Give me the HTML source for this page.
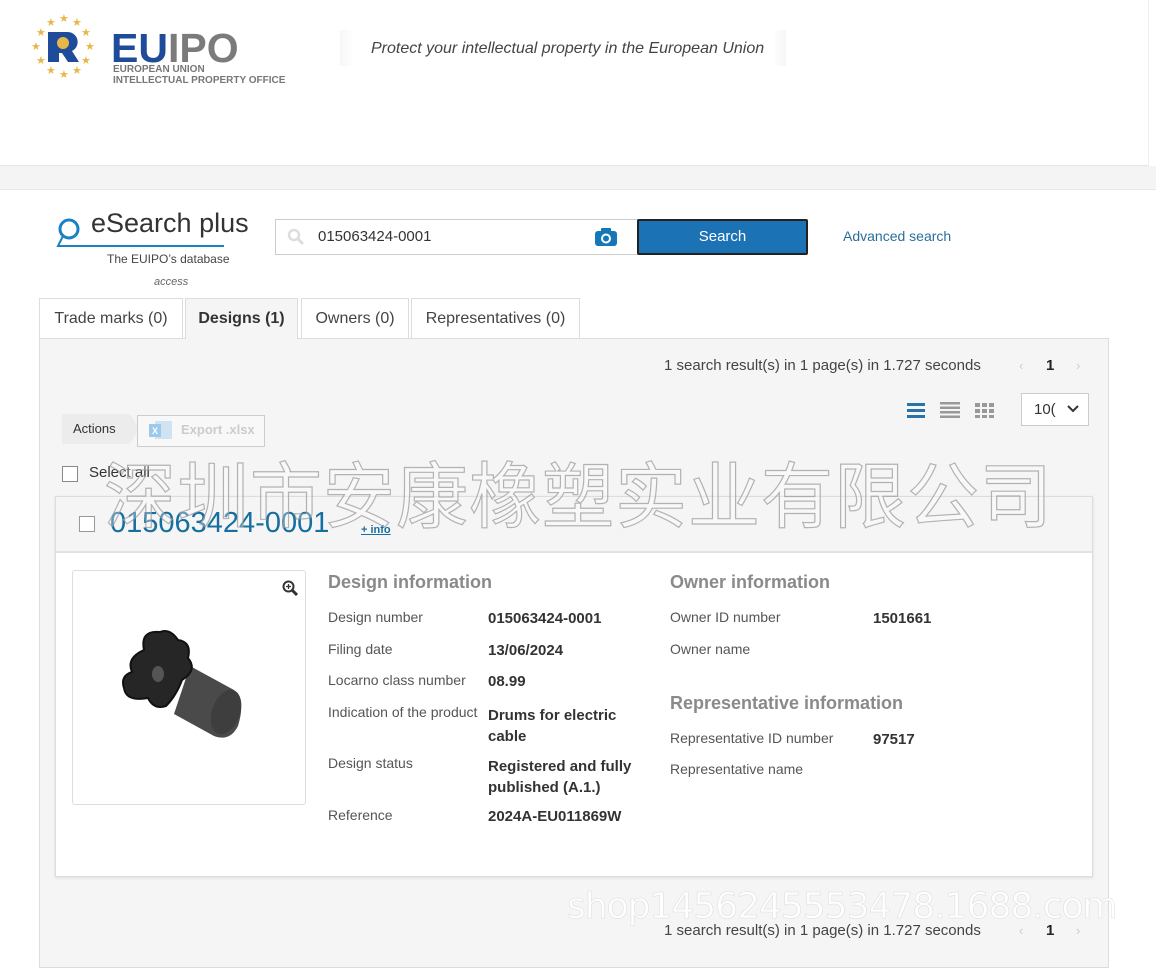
<!DOCTYPE html>
<html><head><meta charset="utf-8"><style>
*{margin:0;padding:0;box-sizing:border-box}
body{width:1156px;height:955px;overflow:hidden;background:#fff;font-family:"Liberation Sans","DejaVu Sans",sans-serif;position:relative;color:#333}
.a{position:absolute;white-space:nowrap}
.lbl{font-size:14px;color:#555}
.val{font-size:15px;font-weight:bold;color:#333}
.h{font-size:18px;font-weight:bold;color:#8a8a8a}
</style></head><body>
<div class="a" style="left:0;top:0;width:1149px;height:166px;background:#fff;border-right:1px solid #eee;border-bottom:1px solid #e6e6e6"></div>
<div class="a" style="left:0;top:166px;width:1156px;height:24px;background:#f4f4f4;border-bottom:1px solid #e8e8e8"></div>
<svg class="a" style="left:26px;top:12px" width="74" height="74" viewBox="0 0 74 74">
<g fill="#e6b84a" font-size="11" font-family="DejaVu Sans">
<text x="33" y="10">★</text><text x="46" y="14">★</text><text x="55" y="24">★</text><text x="59" y="38">★</text><text x="55" y="52">★</text><text x="46" y="62">★</text><text x="33" y="66">★</text><text x="20" y="62">★</text><text x="10" y="52">★</text><text x="5" y="38">★</text><text x="10" y="24">★</text><text x="20" y="14">★</text>
</g>
<path d="M22 20h20a10 10 0 0 1 4 19l7 11h-11l-6-9h-3v9h-11z" fill="#1f4c9a"/>
<circle cx="37" cy="31" r="6" fill="#e6b84a"/>
</svg>
<div class="a" style="left:111px;top:28px;font-size:41px;font-weight:900;letter-spacing:0px;line-height:40px"><span style="color:#1f4c9a">EU</span><span style="color:#7b7b7b">IPO</span></div>
<div class="a" style="left:113px;top:64px;font-size:10px;color:#777;line-height:11px;font-weight:bold">EUROPEAN UNION<br>INTELLECTUAL PROPERTY OFFICE</div>
<div class="a" style="left:340px;top:30px;width:446px;height:36px;background:linear-gradient(90deg,#f6f6f6,#fff 3%,#fff 97%,#f6f6f6)"></div>
<div class="a" style="left:371px;top:40px;font-size:16px;font-style:italic;color:#444">Protect your intellectual property in the European Union</div>

<svg class="a" style="left:54px;top:215px" width="180" height="36"><circle cx="15" cy="14" r="9" fill="none" stroke="#1a82c4" stroke-width="3"/><path d="M9 21 L4 31 L170 31" fill="none" stroke="#1a82c4" stroke-width="2"/></svg>
<div class="a" style="left:91px;top:208px;font-size:27px;color:#333">eSearch plus</div>
<div class="a" style="left:107px;top:252px;font-size:12px;color:#444">The EUIPO’s database</div>
<div class="a" style="left:154px;top:276px;font-size:11px;font-style:italic;color:#666">access</div>

<div class="a" style="left:275px;top:219px;width:364px;height:36px;border:1px solid #ccc;background:#fff"></div>
<svg class="a" style="left:287px;top:228px" width="18" height="18"><circle cx="7" cy="7" r="5" fill="none" stroke="#ddd" stroke-width="2.5"/><path d="M11 11l5 5" stroke="#ddd" stroke-width="3"/></svg>
<div class="a" style="left:318px;top:228px;font-size:15px;color:#333">015063424-0001</div>
<svg class="a" style="left:595px;top:228px" width="22" height="18"><rect x="0" y="3" width="22" height="15" rx="3" fill="#1577b5"/><rect x="6" y="0" width="10" height="5" rx="1" fill="#1577b5"/><circle cx="11" cy="10.5" r="4" fill="none" stroke="#fff" stroke-width="2"/></svg>
<div class="a" style="left:637px;top:219px;width:171px;height:36px;background:#1b72b5;border:2px solid #222;border-radius:2px;color:#fff;font-size:15px;text-align:center;line-height:32px">Search</div>
<div class="a" style="left:843px;top:228px;font-size:14px;color:#2a6e9b">Advanced search</div>

<div class="a" style="left:39px;top:298px;width:144px;height:41px;border:1px solid #ddd;border-bottom:none;background:#fff;font-size:16px;color:#444;text-align:center;line-height:40px">Trade marks (0)</div>
<div class="a" style="left:185px;top:298px;width:113px;height:41px;border:1px solid #ddd;border-bottom:none;background:#f5f5f5;font-size:16px;font-weight:bold;color:#333;text-align:center;line-height:40px;z-index:2">Designs (1)</div>
<div class="a" style="left:301px;top:298px;width:108px;height:41px;border:1px solid #ddd;border-bottom:none;background:#fff;font-size:16px;color:#444;text-align:center;line-height:40px">Owners (0)</div>
<div class="a" style="left:411px;top:298px;width:169px;height:41px;border:1px solid #ddd;border-bottom:none;background:#fff;font-size:16px;color:#444;text-align:center;line-height:40px">Representatives (0)</div>

<div class="a" style="left:39px;top:338px;width:1070px;height:630px;background:#f5f5f5;border:1px solid #ddd"></div>
<div class="a" style="left:664px;top:357px;font-size:15px;color:#444">1 search result(s) in 1 page(s) in 1.727 seconds</div>
<div class="a" style="left:1019px;top:358px;font-size:13px;color:#ccc">‹</div>
<div class="a" style="left:1046px;top:357px;font-size:15px;font-weight:bold;color:#222">1</div>
<div class="a" style="left:1076px;top:358px;font-size:13px;color:#ccc">›</div>
<svg class="a" style="left:907px;top:402px" width="92" height="16">
<rect x="0" y="1" width="18" height="3" fill="#2a72aa"/><rect x="0" y="7" width="18" height="3" fill="#2a72aa"/><rect x="0" y="13" width="18" height="3" fill="#2a72aa"/>
<g fill="#999"><rect x="33" y="0" width="20" height="2.5"/><rect x="33" y="4.5" width="20" height="2.5"/><rect x="33" y="9" width="20" height="2.5"/><rect x="33" y="13.5" width="20" height="2.5"/>
<rect x="68" y="1" width="5" height="4"/><rect x="75" y="1" width="5" height="4"/><rect x="82" y="1" width="5" height="4"/><rect x="68" y="7" width="5" height="4"/><rect x="75" y="7" width="5" height="4"/><rect x="82" y="7" width="5" height="4"/><rect x="68" y="13" width="5" height="3"/><rect x="75" y="13" width="5" height="3"/><rect x="82" y="13" width="5" height="3"/></g></svg>
<div class="a" style="left:1021px;top:393px;width:68px;height:33px;border:1px solid #ccc;background:#fff;font-size:15px;color:#333;padding:7px 0 0 12px">10(</div>
<svg class="a" style="left:1066px;top:404px" width="14" height="10"><path d="M2 2l5 5 5-5" fill="none" stroke="#333" stroke-width="2"/></svg>

<svg class="a" style="left:62px;top:414px" width="78" height="30"><path d="M0 0h68l9 15-9 15H0z" fill="#ececec"/></svg>
<div class="a" style="left:73px;top:421px;font-size:13px;color:#333">Actions</div>
<div class="a" style="left:137px;top:415px;width:128px;height:32px;border:1px solid #ccc;background:#f8f8f8"></div>
<svg class="a" style="left:149px;top:420px" width="24" height="20"><rect x="6" y="1" width="17" height="18" fill="#cfe3f2"/><rect x="0" y="4" width="12" height="13" fill="#9cc9ec"/><text x="3" y="14" font-size="9" fill="#fff" font-family="Liberation Sans" font-weight="bold">X</text></svg>
<div class="a" style="left:181px;top:422px;font-size:13px;font-weight:bold;color:#ccc">Export .xlsx</div>
<div class="a" style="left:62px;top:466px;width:16px;height:16px;border:1px solid #888;background:#fff"></div>
<div class="a" style="left:89px;top:464px;font-size:15px;color:#333">Select all</div>

<div class="a" style="left:55px;top:496px;width:1038px;height:381px;background:#fff;border:1px solid #ddd;box-shadow:0 1px 3px rgba(0,0,0,.1)"></div>
<div class="a" style="left:56px;top:497px;width:1036px;height:56px;background:#f5f5f5;border-bottom:2px solid #e2e2e2"></div>
<div class="a" style="left:79px;top:516px;width:16px;height:16px;border:1px solid #999;background:#fff"></div>
<div class="a" style="left:110px;top:507px;font-size:29px;color:#166fa1">015063424-0001</div>
<div class="a" style="left:361px;top:524px;font-size:11px;font-weight:bold;color:#166fa1;text-decoration:underline">+ info</div>

<div class="a" style="left:72px;top:570px;width:234px;height:235px;border:1px solid #ddd;border-radius:3px;background:#fff"></div>
<svg class="a" style="left:282px;top:580px" width="16" height="16"><circle cx="6.5" cy="6.5" r="5" fill="none" stroke="#333" stroke-width="2"/><path d="M10 10l5 5" stroke="#333" stroke-width="3"/><path d="M4 6.5h5M6.5 4v5" stroke="#333" stroke-width="1.3"/></svg>
<svg class="a" style="left:118px;top:628px" width="130" height="112">
<path d="M72 38 L116 62 Q128 72 120 98 Q112 114 96 108 L56 86 Z" fill="#4a4a4a"/>
<ellipse cx="108" cy="84" rx="14" ry="23" transform="rotate(20 108 84)" fill="#3e3e3e"/>
<path d="M26 22 Q22 2 42 4 Q52 0 60 12 Q74 14 70 30 Q80 42 64 52 Q58 68 48 78 Q36 82 30 70 Q8 74 6 60 Q2 48 14 44 Q8 30 26 22 Z" fill="#262626" stroke="#111" stroke-width="2"/>
<ellipse cx="40" cy="46" rx="6" ry="8" fill="#555"/>
</svg>

<div class="a h" style="left:328px;top:572px">Design information</div>
<div class="a lbl" style="left:328px;top:609px">Design number</div><div class="a val" style="left:488px;top:610px">015063424-0001</div>
<div class="a lbl" style="left:328px;top:641px">Filing date</div><div class="a val" style="left:488px;top:642px">13/06/2024</div>
<div class="a lbl" style="left:328px;top:672px">Locarno class number</div><div class="a val" style="left:488px;top:673px">08.99</div>
<div class="a lbl" style="left:328px;top:704px">Indication of the product</div><div class="a val" style="left:488px;top:705px;line-height:21px">Drums for electric<br>cable</div>
<div class="a lbl" style="left:328px;top:755px">Design status</div><div class="a val" style="left:488px;top:756px;line-height:21px">Registered and fully<br>published (A.1.)</div>
<div class="a lbl" style="left:328px;top:807px">Reference</div><div class="a val" style="left:488px;top:808px">2024A-EU011869W</div>

<div class="a h" style="left:670px;top:572px">Owner information</div>
<div class="a lbl" style="left:670px;top:609px">Owner ID number</div><div class="a val" style="left:873px;top:610px">1501661</div>
<div class="a lbl" style="left:670px;top:641px">Owner name</div>
<div class="a h" style="left:670px;top:693px">Representative information</div>
<div class="a lbl" style="left:670px;top:730px">Representative ID number</div><div class="a val" style="left:873px;top:731px">97517</div>
<div class="a lbl" style="left:670px;top:761px">Representative name</div>

<div class="a" style="left:664px;top:922px;font-size:15px;color:#444">1 search result(s) in 1 page(s) in 1.727 seconds</div>
<div class="a" style="left:1019px;top:923px;font-size:13px;color:#ccc">‹</div>
<div class="a" style="left:1046px;top:922px;font-size:15px;font-weight:bold;color:#222">1</div>
<div class="a" style="left:1076px;top:923px;font-size:13px;color:#ccc">›</div>

<div class="a" style="left:104px;top:441px;font-size:72px;line-height:100px;font-family:'Noto Sans CJK SC',sans-serif;color:rgba(255,255,255,0.3);-webkit-text-stroke:1.2px rgba(150,150,150,0.7);letter-spacing:1px;z-index:5">深圳市安康橡塑实业有限公司</div>
<div class="a" style="left:567px;top:886px;font-size:36px;font-family:'DejaVu Sans',sans-serif;color:rgba(255,255,255,0.9);-webkit-text-stroke:0.5px rgba(200,200,200,0.6);letter-spacing:-1px;z-index:5">shop1456245553478.1688.com</div>
</body></html>
